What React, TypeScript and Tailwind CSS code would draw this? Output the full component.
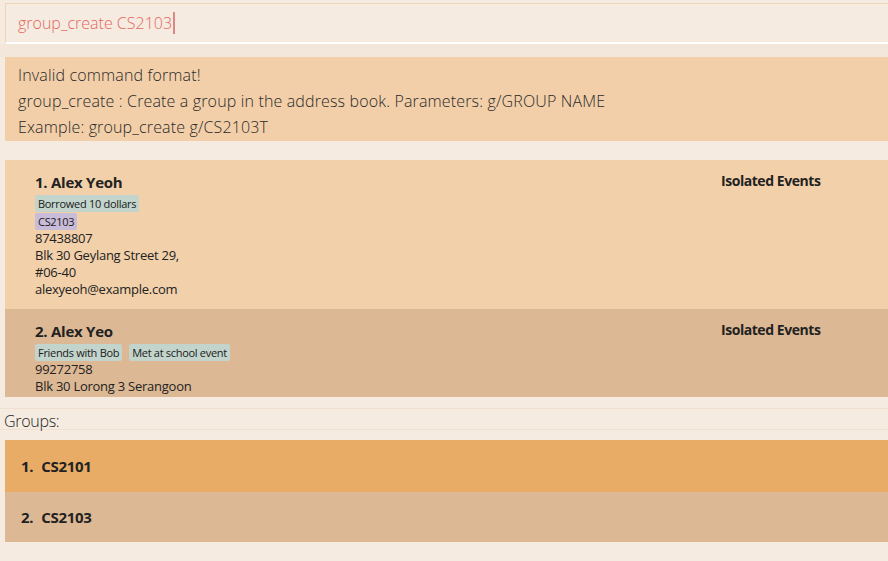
import React from "react";

const font = { fontFamily: '"Open Sans", "Noto Sans", sans-serif' };

function Tag({ children, color }: { children: React.ReactNode; color: string }) {
  return (
    <span className={`inline-block h-[17px] px-[3px] rounded-[2px] text-[11px] leading-[17px] tracking-[-0.3px] text-[#1a1a1a] ${color}`}>
      {children}
    </span>
  );
}

export default function App() {
  return (
    <div className="w-[888px] h-[561px] bg-[#f5ebe1] overflow-hidden text-[#222]" style={font}>
      {/* command box */}
      <div className="pt-[3px] pl-[5px]">
        <div className="h-[41px] border-l border-t border-[#efd4b5] border-b-2 border-b-white flex items-center pl-[12px]">
          <span className="text-[16px] font-light text-[#e5675c] leading-none">group_create CS2103</span>
          <span className="inline-block w-[1.5px] h-[22px] bg-[#d98a80] ml-[1px]" />
        </div>
      </div>
      <div className="h-[13px] bg-[#f3e6da]" />
      {/* result */}
      <div className="pl-[5px]">
        <div className="h-[84px] bg-[#f2cfa9] pl-[13px] pt-[5px] text-[16px] font-light leading-[26px] text-[#2a2a2a] tracking-[0.15px]">
          <div>Invalid command format!</div>
          <div>group_create : Create a group in the address book. Parameters: g/GROUP NAME</div>
          <div>Example: group_create g/CS2103T</div>
        </div>
      </div>
      <div className="h-[19px]" />
      {/* person list */}
      <div className="pl-[5px]">
        <div className="h-[237px] overflow-hidden">
          <div className="h-[149px] bg-[#f2d0aa] pl-[30px] pt-[12px] pb-[10px] flex">
            <div className="flex-1">
              <div className="text-[15px] font-bold leading-[20px] tracking-[-0.25px]">1. Alex Yeoh</div>
              <div className="mt-[3px] flex flex-col items-start gap-[1px]">
                <Tag color="bg-[#c2d4cb]">Borrowed 10 dollars</Tag>
                <Tag color="bg-[#c9bcd8]">CS2103</Tag>
              </div>
              <div className="text-[13px] leading-[17px] tracking-[-0.25px]">
                <div>87438807</div>
                <div>Blk 30 Geylang Street 29,</div>
                <div>#06-40</div>
                <div>alexyeoh@example.com</div>
              </div>
            </div>
            <div className="w-[167px] text-[14px] font-bold leading-[18px] tracking-[-0.45px]">Isolated Events</div>
          </div>
          <div className="h-[149px] bg-[#dcb894] pl-[30px] pt-[12px] flex">
            <div className="flex-1">
              <div className="text-[15px] font-bold leading-[20px] tracking-[-0.25px]">2. Alex Yeo</div>
              <div className="mt-[3px] flex gap-[7px]">
                <Tag color="bg-[#c2d4cb]">Friends with Bob</Tag>
                <Tag color="bg-[#c2d4cb]">Met at school event</Tag>
              </div>
              <div className="text-[13px] leading-[17px] tracking-[-0.25px]">
                <div>99272758</div>
                <div>Blk 30 Lorong 3 Serangoon</div>
              </div>
            </div>
            <div className="w-[167px] text-[14px] font-bold leading-[18px] tracking-[-0.45px]">Isolated Events</div>
          </div>
        </div>
      </div>
      {/* groups */}
      <div className="mt-[11px] border-t border-b border-[#f0e0d0] h-[22px] pl-[4px] pt-[2px] text-[16px] font-light leading-[20px] text-[#1e1e1e] tracking-[-0.3px]">
        Groups:
      </div>
      <div className="h-[10px]" />
      <div className="pl-[5px]">
        <div className="h-[52px] bg-[#e8ac66] pl-[16px] flex items-center text-[15px] font-bold tracking-[-0.3px]">
          <span>1.</span>
          <span className="ml-[8px]">CS2101</span>
        </div>
        <div className="h-[50px] bg-[#ddb894] pl-[16px] flex items-center text-[15px] font-bold tracking-[-0.3px]">
          <span>2.</span>
          <span className="ml-[8px]">CS2103</span>
        </div>
      </div>
    </div>
  );
}
